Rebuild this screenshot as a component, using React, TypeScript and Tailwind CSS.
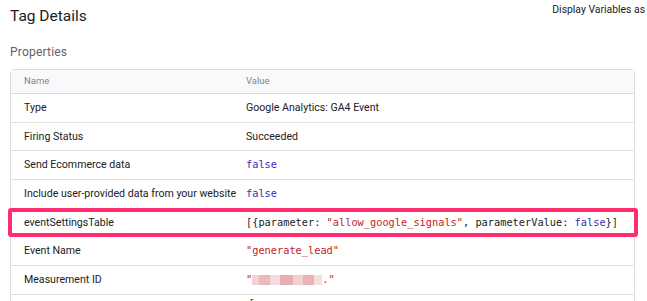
import React from "react";

interface Row {
  name: string;
  value: React.ReactNode;
  highlight?: boolean;
}

const Str = ({ children }: { children: React.ReactNode }) => (
  <span className="text-[#c5221f]">{children}</span>
);
const Bool = ({ children }: { children: React.ReactNode }) => (
  <span className="text-[#3c2bb5]">{children}</span>
);

const mono = "font-['DejaVu_Sans_Mono',monospace] text-[10.3px]";

// blurred measurement id
const Blurred = () => (
  <span className="inline-flex items-center h-[12px] align-middle">
    <span className="w-[7px] h-[10px] bg-[#f1d2d4]" />
    <span className="w-[11px] h-[10px] bg-[#e9b9bc]" />
    <span className="w-[10px] h-[10px] bg-[#f3dcdd]" />
    <span className="w-[13px] h-[10px] bg-[#e4aeb2]" />
    <span className="w-[10px] h-[10px] bg-[#f0cfd1]" />
    <span className="w-[11px] h-[10px] bg-[#e7b5b8]" />
    <span className="w-[8px] h-[10px] bg-[#f4dfe0]" />
  </span>
);

const rows: Row[] = [
  { name: "Type", value: "Google Analytics: GA4 Event" },
  { name: "Firing Status", value: "Succeeded" },
  { name: "Send Ecommerce data", value: <span className={mono}><Bool>false</Bool></span> },
  { name: "Include user-provided data from your website", value: <span className={mono}><Bool>false</Bool></span> },
  {
    name: "eventSettingsTable",
    highlight: true,
    value: (
      <span className={`${mono} text-[#202124]`}>
        [{"{"}parameter: <Str>"allow_google_signals"</Str>, parameterValue: <Bool>false</Bool>{"}"}]
      </span>
    ),
  },
  { name: "Event Name", value: <span className={mono}><Str>"generate_lead"</Str></span> },
  {
    name: "Measurement ID",
    value: (
      <span className={`${mono} inline-flex items-center`}>
        <Str>"</Str>
        <Blurred />
        <Str>."</Str>
      </span>
    ),
  },
];

export default function App() {
  return (
    <div className="w-[647px] h-[301px] overflow-hidden bg-white text-[#202124] font-['Roboto',sans-serif]">
      <div className="flex justify-between">
        <h1 className="pl-[10px] pt-[6px] text-[15.5px] leading-[20px]">Tag Details</h1>
        <div className="pt-[3px] pr-[2px] text-[10.4px] leading-[14px]">Display Variables as</div>
      </div>

      <div className="pl-[10px] pt-[19px] text-[12px] leading-[15px] tracking-[0.2px] text-[#5f6368]">Properties</div>

      <div className="mt-[9px] ml-[10px] w-[625px] border border-[#dadce0] rounded-t-[4px]">
        <div className="flex h-[24px] items-center bg-[#f8f9fa] border-b border-[#dadce0] text-[9.5px] text-[#80868b]">
          <div className="w-[235px] pl-[13px]">Name</div>
          <div>Value</div>
        </div>
        {rows.map((r) => (
          <div key={r.name} className="relative flex h-[28.7px] items-center border-b border-[#e0e0e0] text-[10.6px]">
            <div className="w-[235px] pl-[13px] whitespace-nowrap">{r.name}</div>
            <div className="whitespace-nowrap">{r.value}</div>
            {r.highlight && (
              <div className="absolute -left-[3px] -right-[4px] -top-[1px] -bottom-[1px] border-[4px] border-[#ff2d6e] rounded-[3px]" />
            )}
          </div>
        ))}
        <div className="flex h-[29px] items-start pt-[1px] text-[10.6px]">
          <div className="w-[235px] pl-[13px]" />
          <div className={`${mono} text-[#202124] pl-[2px]`}>{"{"}</div>
        </div>
      </div>
    </div>
  );
}
